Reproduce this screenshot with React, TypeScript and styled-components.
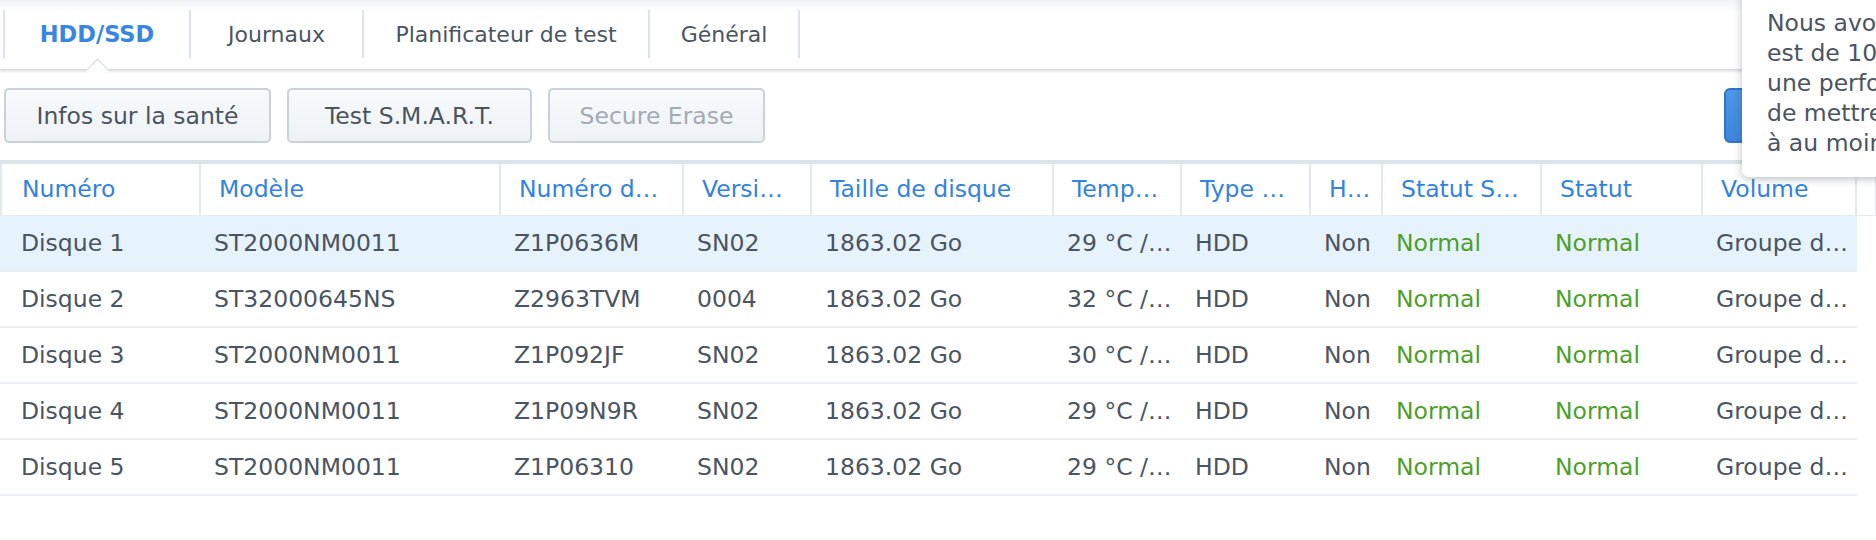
import React from 'react'
import styled, { createGlobalStyle } from 'styled-components'

const GlobalStyle = createGlobalStyle`
  html, body {
    margin: 0;
    padding: 0;
    background: #ffffff;
    overflow: hidden;
  }
  body {
    font-family: "DejaVu Sans", Verdana, sans-serif;
    color: #4b5461;
  }
`

const Colors = {
  text: '#4b5461',
  muted: '#a3abb5',
  blue: '#3183de',
  green: '#4c9f2a',
  line: '#e4e9ef',
}

const Page = styled.div`
  position: relative;
  width: 1876px;
  height: 540px;
  overflow: hidden;
  background: #fff;
`

const TabBar = styled.div`
  position: relative;
  z-index: 1;
  display: flex;
  height: 70px;
  box-sizing: border-box;
  padding: 10px 0 12px 3px;
  background: linear-gradient(#f1f4f7 0px, #ffffff 12px);
  border-bottom: 1px solid #d6dbe1;
  box-shadow: 0 1px 3px rgba(60, 70, 80, 0.22);
`

const Tab = styled.div<{ $active?: boolean; $w: number }>`
  position: relative;
  width: ${(p) => p.$w}px;
  height: 48px;
  box-sizing: border-box;
  display: flex;
  align-items: center;
  justify-content: center;
  border-left: 2px solid #dde3ea;
  font-size: ${(p) => (p.$active ? '22.5px' : '22px')};
  font-weight: ${(p) => (p.$active ? 700 : 400)};
  color: ${(p) => (p.$active ? '#3886df' : Colors.text)};
  white-space: nowrap;

  &:last-child {
    border-right: 2px solid #dde3ea;
  }
`

const Notch = styled.span`
  position: absolute;
  left: calc(50% - 8.5px);
  top: 51.5px;
  width: 17px;
  height: 17px;
  background: #fff;
  border-top: 1px solid #d2d8de;
  border-left: 1px solid #d2d8de;
  box-sizing: border-box;
  transform: rotate(45deg);
`

const Toolbar = styled.div`
  display: flex;
  align-items: center;
  gap: 16px;
  height: 55px;
  margin-top: 18px;
  padding-left: 4px;
`

const Button = styled.button<{ $disabled?: boolean; $w: number }>`
  width: ${(p) => p.$w}px;
  height: 55px;
  box-sizing: border-box;
  padding: 0;
  border: 2px solid #c9d1da;
  border-radius: 5px;
  background: linear-gradient(#f8fafc, #eef2f6);
  font-family: "DejaVu Sans", Verdana, sans-serif;
  font-size: 23.5px;
  color: ${(p) => (p.$disabled ? Colors.muted : Colors.text)};
  white-space: nowrap;
`

const PrimaryButton = styled.button`
  width: 130px;
  height: 55px;
  margin-left: auto;
  margin-right: 22px;
  border: 2px solid #2e74cc;
  border-radius: 6px;
  background: linear-gradient(#4c97e6, #3d85db);
`

const Table = styled.div`
  margin-top: 17px;
`

const cols = '201px 300px 183px 128px 242px 128px 129px 72px 159px 161px 154px'

const HeaderRow = styled.div`
  display: grid;
  grid-template-columns: ${cols} 1fr;
  height: 56px;
  box-sizing: border-box;
  border-top: 4px solid #dce3eb;
  border-bottom: 1px solid #e6ebf0;
`

const HeaderCell = styled.div`
  padding-left: 18px;
  border-right: 2px solid ${Colors.line};
  color: ${Colors.blue};
  font-size: 23.5px;
  line-height: 51px;
  white-space: nowrap;
  overflow: hidden;
  text-overflow: ellipsis;

  &:first-child {
    padding-left: 20px;
    border-left: 2px solid ${Colors.line};
  }
`

const Row = styled.div<{ $selected?: boolean }>`
  display: grid;
  grid-template-columns: ${cols};
  width: 1857px;
  height: 56px;
  box-sizing: border-box;
  border-bottom: 2px solid #ebeff3;
  background: ${(p) => (p.$selected ? '#e6f2fc' : '#fff')};
`

const Cell = styled.div<{ $ok?: boolean }>`
  padding-left: 13px;
  font-size: 23.5px;
  line-height: 54px;
  color: ${(p) => (p.$ok ? Colors.green : Colors.text)};
  white-space: nowrap;
  overflow: hidden;
  text-overflow: ellipsis;

  &:first-child {
    padding-left: 21px;
  }
`

const Tooltip = styled.div`
  position: absolute;
  z-index: 3;
  left: 1742px;
  top: -8px;
  width: 420px;
  padding: 16px 0 19px 25px;
  background: #fff;
  border-radius: 7px;
  box-shadow: 0 2px 9px rgba(40, 50, 60, 0.3);
  font-size: 23.5px;
  line-height: 30px;
  color: ${Colors.text};
  white-space: nowrap;
`

const headers = [
  'Numéro',
  'Modèle',
  'Numéro d…',
  'Versi…',
  'Taille de disque',
  'Temp…',
  'Type …',
  'H…',
  'Statut S…',
  'Statut',
  'Volume',
  '',
]

const disks = [
  ['Disque 1', 'ST2000NM0011', 'Z1P0636M', 'SN02', '29'],
  ['Disque 2', 'ST32000645NS', 'Z2963TVM', '0004', '32'],
  ['Disque 3', 'ST2000NM0011', 'Z1P092JF', 'SN02', '30'],
  ['Disque 4', 'ST2000NM0011', 'Z1P09N9R', 'SN02', '29'],
  ['Disque 5', 'ST2000NM0011', 'Z1P06310', 'SN02', '29'],
]

const tooltipLines = [
  'Nous avons détecté que la vitesse',
  'est de 100 Mbps. Pour obtenir',
  'une performance optimale, il est conseillé',
  'de mettre à niveau votre réseau',
  'à au moins 1 Gbps.',
]

export default function App() {
  return (
    <Page>
      <GlobalStyle />
      <TabBar>
        <Tab $active $w={186}>
          HDD/SSD
          <Notch />
        </Tab>
        <Tab $w={173}>Journaux</Tab>
        <Tab $w={286}>Planificateur de test</Tab>
        <Tab $w={152}>Général</Tab>
      </TabBar>

      <Toolbar>
        <Button $w={267}>Infos sur la santé</Button>
        <Button $w={245}>Test S.M.A.R.T.</Button>
        <Button $w={217} $disabled>
          Secure Erase
        </Button>
        <PrimaryButton />
      </Toolbar>

      <Table>
        <HeaderRow>
          {headers.map((h, i) => (
            <HeaderCell key={i}>{h}</HeaderCell>
          ))}
        </HeaderRow>
        {disks.map(([name, model, serial, fw, temp], i) => (
          <Row key={name} $selected={i === 0}>
            <Cell>{name}</Cell>
            <Cell>{model}</Cell>
            <Cell>{serial}</Cell>
            <Cell>{fw}</Cell>
            <Cell>1863.02 Go</Cell>
            <Cell>{temp} °C /…</Cell>
            <Cell>HDD</Cell>
            <Cell>Non</Cell>
            <Cell $ok>Normal</Cell>
            <Cell $ok>Normal</Cell>
            <Cell>Groupe d…</Cell>
          </Row>
        ))}
      </Table>

      <Tooltip>
        {tooltipLines.map((l) => (
          <div key={l}>{l}</div>
        ))}
      </Tooltip>
    </Page>
  )
}
